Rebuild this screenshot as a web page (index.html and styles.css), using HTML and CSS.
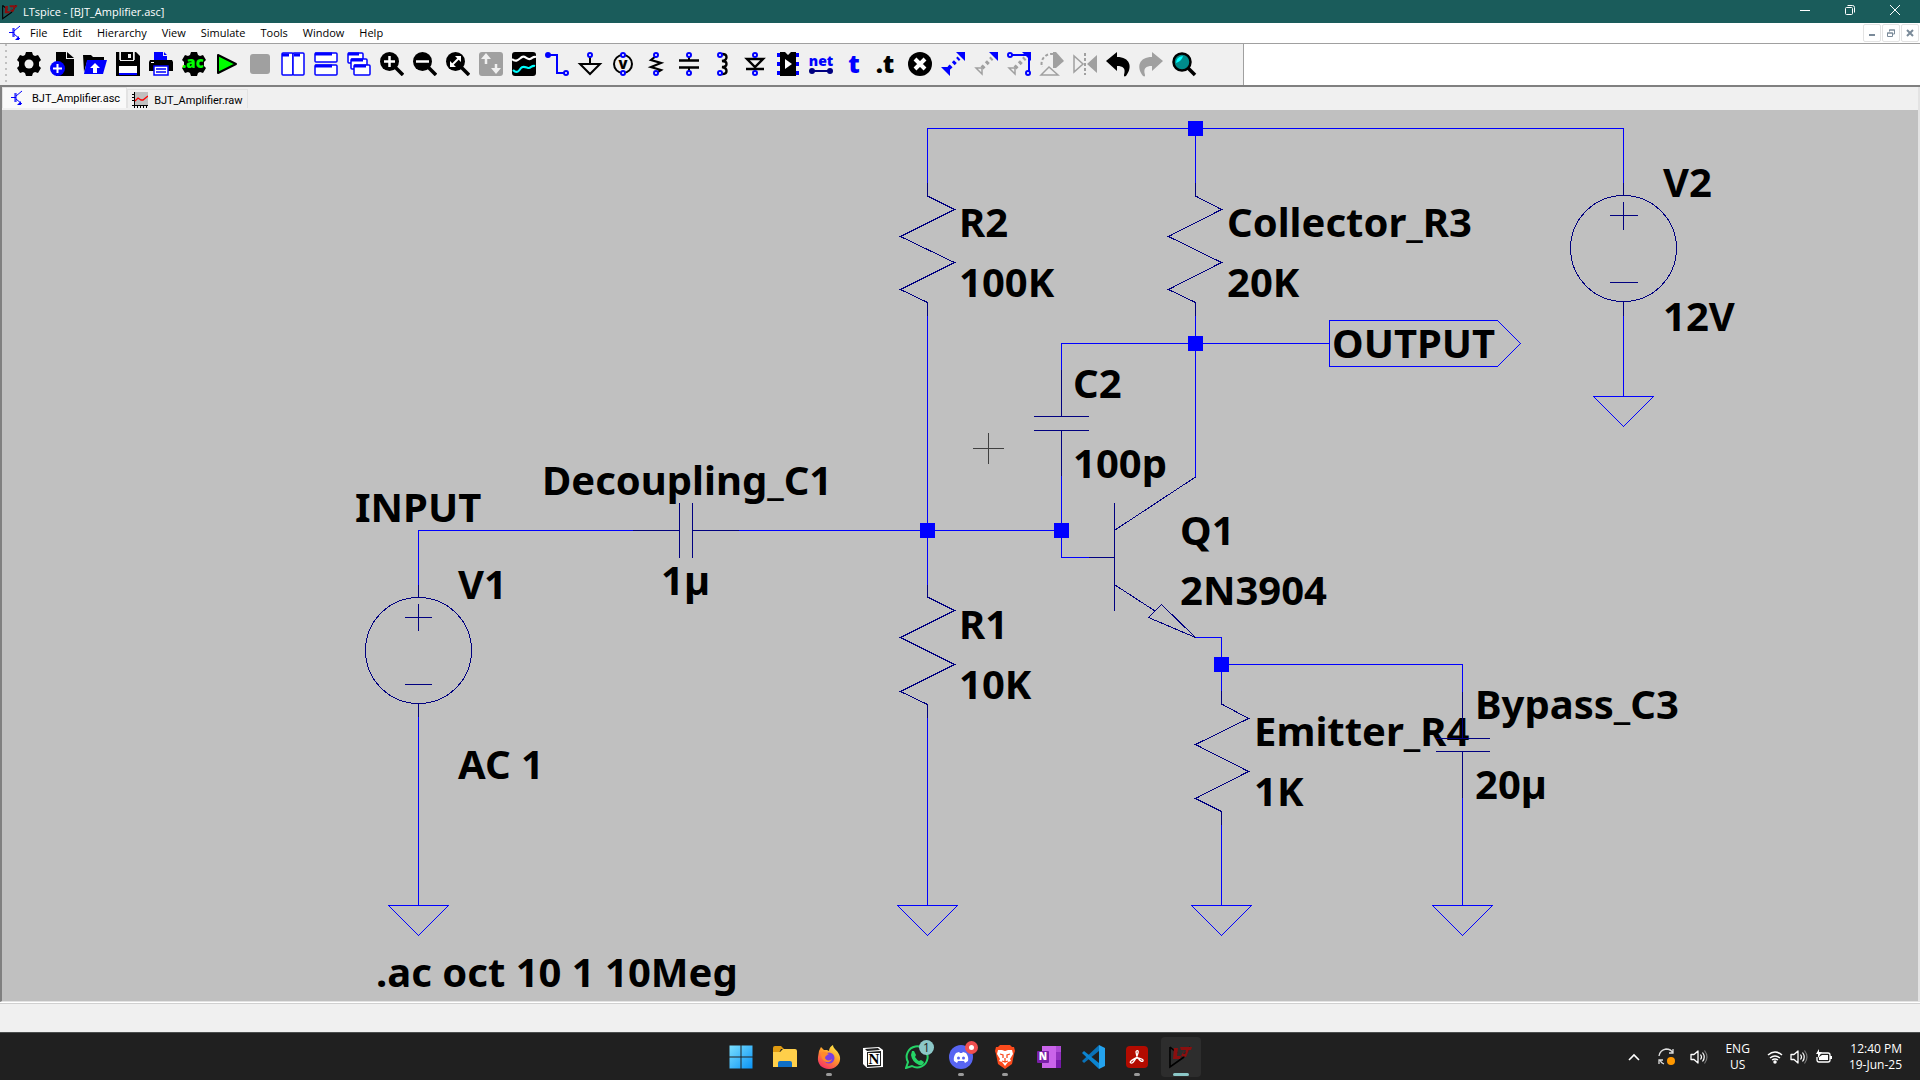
FILE: index.html
```html
<!DOCTYPE html>
<html lang="en">
<head>
<meta charset="utf-8">
<title>LTspice - [BJT_Amplifier.asc]</title>
<link rel="stylesheet" href="styles.css">
</head>
<body>
<svg class="defs" aria-hidden="true">
  <symbol id="lt-logo" viewBox="0 0 24 24"><path d="M1 2v20l14-10M1 2l7 6M21 2l-7 11" fill="none" stroke="#000" stroke-width="1.6"/><path d="M5 3h4l-1 8h4l-1 3H4zM11 2h12l-1 3h-2l-3 7-5-1 3-6h-3zM15 5l-1 4h2l1-4z" fill="#8b0f0f" fill-rule="evenodd"/></symbol>
  <symbol id="npn" viewBox="0 0 12 16"><path d="M4 3v9M5 3v9M0 7.500h5M5 6l6-5M5 9l6 5" fill="none" stroke="#00f"/><path d="M10 11v4H6z" fill="#00f"/></symbol>
  <symbol id="gear" viewBox="0 0 24 24"><path d="M8 3l1-3h6l1 3 2 1 3-1 3 5-2 2v4l2 2-3 5-3-1-2 1-1 3H9l-1-3-2-1-3 1-3-5 2-2v-4L0 8l3-5 3 1z"/></symbol>
  <symbol id="lens" viewBox="0 0 24 24"><circle cx="9.500" cy="9.500" r="9.500"/><path d="M15 15l8 8" stroke="#000" stroke-width="3.500"/></symbol>
  <symbol id="speaker" viewBox="0 0 18 16"><path d="M1 5.500h3L8 2v12l-4-3.500H1z" fill="none" stroke="#fff" stroke-width="1.300" stroke-linejoin="round"/><path d="M10.500 5.500q2 2.500 0 5M12.500 3.500q3.500 4.500 0 9" fill="none" stroke="#fff" stroke-width="1.200"/><path d="M14.500 1.500q5 6.500 0 13" fill="none" stroke="#777" stroke-width="1.200"/></symbol>
  <symbol id="ground" viewBox="0 0 62 32" overflow="visible"><path d="M.5 .5h60L30.500 30.500z" fill="none" stroke="#00f"/></symbol>
</svg>

<div class="window">
  <header class="titlebar">
    <svg class="app-icon"><use href="#lt-logo"/></svg>
    <h1 class="title">LTspice - [BJT_Amplifier.asc]</h1>
    <button class="win-btn" aria-label="Minimize"><svg width="10" height="10"><path d="M0 5.500h10" stroke="#fff"/></svg></button>
    <button class="win-btn" aria-label="Restore"><svg width="10" height="10" fill="none" stroke="#fff"><rect x=".5" y="2.500" width="7" height="7" rx="1"/><path d="M2.500 .5h5q2 0 2 2v5"/></svg></button>
    <button class="win-btn" aria-label="Close"><svg width="10" height="10"><path d="M0 0l10 10M10 0L0 10" stroke="#fff"/></svg></button>
  </header>

  <nav class="menubar">
    <svg class="doc-icon"><use href="#npn"/></svg>
    <button>File</button><button>Edit</button><button>Hierarchy</button><button>View</button><button>Simulate</button><button>Tools</button><button>Window</button><button>Help</button>
    <div class="mdi">
      <button aria-label="Minimize document"><svg width="8" height="8"><path d="M1 6h6" stroke="#7a8a99" stroke-width="2"/></svg></button>
      <button aria-label="Restore document"><svg width="8" height="8" fill="none" stroke="#7a8a99"><path d="M2.500 2.500V1h5v4H6M.5 4v3.500h5V4zM0 4h6M2 1h6" /></svg></button>
      <button aria-label="Close document"><svg width="8" height="8"><path d="M1 1l6 6M7 1L1 7" stroke="#7a8a99" stroke-width="2"/></svg></button>
    </div>
  </nav>

  <div class="toolbar-row">
    <div class="toolbar" role="toolbar" aria-label="Main">
      <button aria-label="Settings"><svg viewBox="0 0 24 24"><use href="#gear"/><circle cx="12" cy="12" r="4.500" fill="#f0f0f0"/></svg></button>
      <button aria-label="New schematic"><svg viewBox="0 0 24 24"><path d="M6 0h10v7h8v17H6z"/><path d="M17 0l7 6h-7z"/><circle cx="7.500" cy="16.500" r="7.500" fill="#00f"/><path d="M7.500 12v9M3 16.500h9" stroke="#fff" stroke-width="2"/></svg></button>
      <button aria-label="Open"><svg viewBox="0 0 24 24"><path d="M0 3h8l2 2h11v5H4L1 20z"/><path d="M4 8h20l-4 14H1z" fill="#00f"/><path d="M12 11l5 5h-3v5h-4v-5H7z" fill="#fff"/></svg></button>
      <button aria-label="Save"><svg viewBox="0 0 24 24"><path d="M0 0h4v9h14V0h2l4 4v20H0z"/><path d="M5 0h12v8H5z"/><path d="M4 0v8M18 0v8" stroke="#f0f0f0" stroke-width="1.500"/><path d="M12 2h3v4h-3z" fill="#f0f0f0"/><path d="M3 14h18v8H3z" fill="#fff"/><path d="M3 21h18v2H3z" fill="#00f"/></svg></button>
      <button aria-label="Print"><svg viewBox="0 0 24 24"><path d="M5 0h9v4h4v4H5zM15 0l3 3h-3z" fill="#00f"/><path d="M1 8h22l1 2v9H0v-9z"/><path d="M5 14h14v9H5z" fill="#fff" stroke="#00f" stroke-width="1.500"/><path d="M7 17h10M7 20h10" stroke="#00f" stroke-width="1.500"/><path d="M2 10h3v1H2z" fill="#fff"/></svg></button>
      <button aria-label="Configure analysis"><svg viewBox="0 0 24 24"><use href="#gear"/><text class="ico-text" x="0" y="16" font-size="15" fill="#0f0">.ac</text></svg></button>
      <button aria-label="Run"><svg viewBox="0 0 24 24"><path d="M3 3v18l18-9z" fill="#0f0" stroke="#000" stroke-width="2" stroke-linejoin="round"/></svg></button>
      <button aria-label="Stop" disabled><svg viewBox="0 0 24 24"><rect x="2" y="2" width="20" height="20" rx="3" fill="#a0a0a0"/></svg></button>
      <button aria-label="Tile vertically"><svg viewBox="0 0 24 24" fill="#fff" stroke="#00f" stroke-width="1.500"><rect x="1" y="1" width="11" height="22" rx="1"/><rect x="12" y="1" width="11" height="22" rx="1"/><path d="M1 3h7M13 3h6" stroke-width="3"/></svg></button>
      <button aria-label="Tile horizontally"><svg viewBox="0 0 24 24" fill="#fff" stroke="#00f" stroke-width="1.500"><rect x="1" y="1" width="22" height="9" rx="1"/><rect x="1" y="13" width="22" height="10" rx="1"/><path d="M1 2h17M1 14h17" stroke-width="3"/></svg></button>
      <button aria-label="Cascade"><svg viewBox="0 0 24 24" fill="#fff" stroke="#00f" stroke-width="1.500"><rect x="1" y="1" width="15" height="10" rx="1"/><path d="M1 2h11" stroke-width="3"/><rect x="4" y="7" width="16" height="10" rx="1"/><path d="M4 8h12" stroke-width="3"/><rect x="7" y="13" width="16" height="10" rx="1"/><path d="M7 14h12" stroke-width="3"/></svg></button>
      <button aria-label="Zoom in"><svg viewBox="0 0 24 24"><use href="#lens"/><path d="M9.500 4v11M4 9.500h11" stroke="#fff" stroke-width="2.500"/></svg></button>
      <button aria-label="Zoom out"><svg viewBox="0 0 24 24"><use href="#lens"/><path d="M3 9.500h13" stroke="#fff" stroke-width="2.500"/></svg></button>
      <button aria-label="Zoom to fit"><svg viewBox="0 0 24 24"><use href="#lens"/><path d="M6 13l7-7" stroke="#fff" stroke-width="2"/><path d="M9 4h6v6zM4 9v6h6z" fill="#fff"/></svg></button>
      <button aria-label="Autorange" disabled><svg viewBox="0 0 24 24"><rect width="24" height="24" rx="3" fill="#a0a0a0"/><path d="M7 5v7M17 12v7" stroke="#f0f0f0" stroke-width="2.500"/><path d="M7 1l5 6H2zM17 22l-5-6h10z" fill="#f0f0f0"/></svg></button>
      <button aria-label="Waveforms"><svg viewBox="0 0 24 24"><rect width="24" height="24" rx="3"/><path d="M0 7c4 4 7 0 10-2s5 3 8 2 3-3 6-2" fill="none" stroke="#fff" stroke-width="2.200"/><path d="M1 18c4 4 6 1 8-2s6 0 8 0 3-3 6-2" fill="none" stroke="#0ff" stroke-width="2.200"/></svg></button>
      <button aria-label="Wire"><svg viewBox="0 0 24 24" fill="none" stroke="#00f" stroke-width="2"><circle cx="3" cy="3" r="2" fill="#00f"/><path d="M3 3h9v18h7"/><circle cx="21" cy="21" r="2" fill="#fff"/></svg></button>
      <button aria-label="Ground"><svg viewBox="0 0 24 24" fill="none" stroke="#000" stroke-width="2"><path d="M12 5v7M2 12h20L12 22z"/><circle cx="12" cy="3" r="2" stroke="#00f" fill="#fff"/></svg></button>
      <button aria-label="Voltage source"><svg viewBox="0 0 24 24"><circle cx="12" cy="12" r="9" fill="none" stroke="#000" stroke-width="2"/><text class="ico-text" x="12" y="17" text-anchor="middle" font-size="13">V</text><g fill="#fff" stroke="#00f" stroke-width="2"><circle cx="12" cy="3" r="2"/><circle cx="12" cy="21" r="2"/></g></svg></button>
      <button aria-label="Resistor"><svg viewBox="0 0 24 24"><path d="M12 4l-5 4 10 3-10 4 10 3-5 3" fill="none" stroke="#000" stroke-width="2.200"/><g fill="#fff" stroke="#00f" stroke-width="2"><circle cx="12" cy="3" r="2"/><circle cx="12" cy="21" r="2"/></g></svg></button>
      <button aria-label="Capacitor"><svg viewBox="0 0 24 24"><path d="M2 8.500h20M2 15.500h20" stroke="#000" stroke-width="2.600"/><path d="M12 4v4M12 16v4" stroke="#000" stroke-width="2"/><g fill="#fff" stroke="#00f" stroke-width="2"><circle cx="12" cy="3" r="2"/><circle cx="12" cy="21" r="2"/></g></svg></button>
      <button aria-label="Inductor"><svg viewBox="0 0 24 24"><path d="M12 2c6 0 6 6 0 7 6 0 6 6 0 6 6 1 6 7 0 7" fill="none" stroke="#000" stroke-width="2.400"/><g fill="#fff" stroke="#00f" stroke-width="2"><circle cx="10" cy="3" r="2"/><circle cx="10" cy="21" r="2"/></g></svg></button>
      <button aria-label="Diode"><svg viewBox="0 0 24 24"><path d="M4 7h16l-8 8zM3 17h18" fill="none" stroke="#000" stroke-width="2.400"/><g fill="#fff" stroke="#00f" stroke-width="2"><circle cx="12" cy="3" r="2"/><circle cx="12" cy="21" r="2"/></g></svg></button>
      <button aria-label="Component"><svg viewBox="0 0 24 24"><path d="M3 1v23M21 1v23" stroke="#00f" stroke-width="4" stroke-dasharray="4 5"/><path d="M4 0h5l3 3 3-3h5v24H4z"/><path d="M9 7v10l7-5z" fill="#fff"/></svg></button>
      <button aria-label="Label net"><svg viewBox="0 0 24 24"><text class="ico-text" x="12" y="14" text-anchor="middle" font-size="14" fill="#00f">net</text><path d="M3 19h18" stroke="#000080" stroke-width="2"/><circle cx="3" cy="19" r="3" fill="#000080"/><circle cx="21" cy="19" r="3" fill="#000080"/></svg></button>
      <button aria-label="Text"><svg viewBox="0 0 24 24"><text class="ico-text" x="12" y="21" text-anchor="middle" font-size="25" fill="#00f">t</text></svg></button>
      <button aria-label="SPICE directive"><svg viewBox="0 0 24 24"><text class="ico-text" x="10" y="21" text-anchor="middle" font-size="25">.t</text></svg></button>
      <button aria-label="Delete"><svg viewBox="0 0 24 24"><circle cx="12" cy="12" r="12"/><path d="M7 7l10 10M17 7L7 17" stroke="#fff" stroke-width="4"/></svg></button>
      <button aria-label="Duplicate"><svg viewBox="0 0 24 24" fill="#00f"><path d="M15 0h9v9zM0 15h9v9z"/><path d="M8 16l10-10" stroke="#00f" stroke-width="4" stroke-dasharray="3 3"/></svg></button>
      <button aria-label="Move"><svg viewBox="0 0 24 24" fill="#00f"><path d="M15 0h9v9z"/><path d="M8 16l10-10" stroke="#a0a0a0" stroke-width="4" stroke-dasharray="3 3"/><path d="M2 16h6v6z" fill="none" stroke="#a0a0a0" stroke-width="1.500"/></svg></button>
      <button aria-label="Drag"><svg viewBox="0 0 24 24" fill="#00f"><path d="M15 0h9v9z"/><path d="M8 16l10-10" stroke="#a0a0a0" stroke-width="4" stroke-dasharray="3 3"/><path d="M2 16h6v6z" fill="none" stroke="#a0a0a0" stroke-width="1.500"/><path d="M5 3h17v16" fill="none" stroke="#00f" stroke-width="2"/><g fill="#fff" stroke="#00f" stroke-width="2"><circle cx="3" cy="3" r="2"/><circle cx="21" cy="21" r="2"/></g></svg></button>
      <button aria-label="Rotate" disabled><svg viewBox="0 0 24 24" fill="#a0a0a0"><path d="M13 0h3l8 9-8 7h-3z"/><path d="M13 2A10 10 0 0 0 2 15" fill="none" stroke="#a0a0a0" stroke-width="2" stroke-dasharray="3 2"/><path d="M1 23l8-8 9 8z" fill="none" stroke="#a0a0a0" stroke-width="1.500"/></svg></button>
      <button aria-label="Mirror" disabled><svg viewBox="0 0 24 24" fill="#a0a0a0"><path d="M24 3v18L14 12z"/><path d="M1 4v16l9-8z" fill="none" stroke="#a0a0a0" stroke-width="1.500"/><path d="M12 1v22" stroke="#a0a0a0" stroke-width="2" stroke-dasharray="3 2"/></svg></button>
      <button aria-label="Undo"><svg viewBox="0 0 24 24"><path d="M0 9l11-9v5c13 0 16 10 9 19-2 1-2 0-2-1 2-7-1-9-7-9v5z"/></svg></button>
      <button aria-label="Redo" disabled><svg viewBox="0 0 24 24"><path d="M24 9L13 0v5C0 5-3 15 4 24c2 1 2 0 2-1-2-7 1-9 7-9v5z" fill="#a0a0a0"/></svg></button>
      <button aria-label="Find"><svg viewBox="0 0 24 24"><path d="M15 15l8 8" stroke="#000" stroke-width="3.500"/><circle cx="10" cy="10" r="8.500" fill="#008b8b" stroke="#000" stroke-width="2.500"/><path d="M4 11q0-6 7-7-1 5-7 7z" fill="#0ff"/></svg></button>
    </div>
  </div>

  <main class="client">
    <div class="tabs" role="tablist">
      <button class="tab active" role="tab" aria-selected="true"><svg class="doc-icon"><use href="#npn"/></svg>BJT_Amplifier.asc</button>
      <button class="tab" role="tab" aria-selected="false"><svg class="plot-icon" viewBox="0 0 16 16"><path fill="#c0c0c0" d="M2 0h14v14H2z"/><path d="M2.500 0v16M0 13.500h16M0 2.500h2M0 5.500h2M0 8.500h2M5.500 14v2M8.500 14v2M11.500 14v2M14.500 14v2" stroke="#000"/><path d="M3 9l3-3 3 2h2l5-4" fill="none" stroke="#f00" stroke-width="1.300"/></svg>BJT_Amplifier.raw</button>
    </div>
    <svg class="schematic" viewBox="2 110 1916 891" preserveAspectRatio="xMidYMid meet" role="img" aria-label="BJT amplifier schematic">
      <g class="labels">
        <text x="355" y="522">INPUT</text>
        <text x="542" y="495">Decoupling_C1</text>
        <text x="458" y="599">V1</text>
        <text x="661" y="595">1µ</text>
        <text x="458" y="779">AC 1</text>
        <text x="959" y="237">R2</text>
        <text x="959" y="297">100K</text>
        <text x="959" y="639">R1</text>
        <text x="959" y="699">10K</text>
        <text x="1227" y="237">Collector_R3</text>
        <text x="1227" y="297">20K</text>
        <text x="1073" y="398">C2</text>
        <text x="1073" y="478">100p</text>
        <text x="1332" y="358">OUTPUT</text>
        <text x="1180" y="545">Q1</text>
        <text x="1180" y="605">2N3904</text>
        <text x="1254" y="746">Emitter_R4</text>
        <text x="1254" y="806">1K</text>
        <text x="1475" y="719">Bypass_C3</text>
        <text x="1475" y="799">20µ</text>
        <text x="1663" y="197">V2</text>
        <text x="1663" y="331">12V</text>
        <text x="376" y="987">.ac oct 10 1 10Meg</text>
      </g>
      <g class="wires">
        <path d="M418.500 585V530.500H633M739 530.500H1061.500M418.500 717V905"/>
        <path d="M927.500 183V128.500H1623.500V183M927.500 316V585M927.500 718V905"/>
        <path d="M1195.500 128V183M1195.500 316V477M1061.500 370V343.500H1329"/>
        <path d="M1061.500 476V557.500H1089M1195 637.500H1221.500V691M1221 664.500H1462.500V692M1221.500 825V905M1462.500 798V905M1623.500 316V396"/>
        <path d="M1329.500 320.500H1497.500L1520.500 343.500L1497.500 366.500H1329.500z"/>
        <use href="#ground" x="388" y="905" width="62" height="32"/>
        <use href="#ground" x="897" y="905" width="62" height="32"/>
        <use href="#ground" x="1191" y="905" width="62" height="32"/>
        <use href="#ground" x="1432" y="905" width="62" height="32"/>
        <use href="#ground" x="1593" y="396" width="62" height="32"/>
      </g>
      <g class="parts">
        <path d="M633 530.500H679.500M679.500 503V558M692.500 503V558M692.500 530.500H739"/>
        <path d="M418.500 585V597M418.500 703V717M405 617.500H432M418.500 604V631M405 684.500H432"/>
        <circle cx="418.500" cy="650.500" r="53"/>
        <path d="M1623.500 183V195M1623.500 301V316M1610 215.500H1638M1623.500 202V230M1610 282.500H1638"/>
        <circle cx="1623.500" cy="248.500" r="53"/>
        <path d="M927.500 183V196L954.500 209.500L900.500 236.500L954.500 262.500L900.500 289.500L927.500 302.500V316"/>
        <path d="M1195.500 183V196L1221.500 209.500L1168.500 236.500L1221.500 262.500L1168.500 289.500L1195.500 302.500V316"/>
        <path d="M927.500 585V597L954.500 610.500L900.500 637.500L954.500 664.500L900.500 691.500L927.500 704.500V718"/>
        <path d="M1221.500 691V704L1248.500 718.500L1195.500 744.500L1248.500 771.500L1195.500 798.500L1221.500 811.500V825"/>
        <path d="M1061.500 370V416.500M1034 416.500H1089M1034 430.500H1089M1061.500 430V476"/>
        <path d="M1462.500 692V738.500M1436 738.500H1490M1436 751.500H1490M1462.500 751V798"/>
        <path d="M1089 557.500H1114M1114.500 503V611M1115 530L1195.500 477M1115 585L1155 611M1161.500 604.500L1148.500 617.500L1195.500 637.500z"/>
      </g>
      <g class="nodes">
        <rect x="1188" y="121" width="15" height="15"/><rect x="1188" y="336" width="15" height="15"/><rect x="920" y="523" width="15" height="15"/><rect x="1054" y="523" width="15" height="15"/><rect x="1214" y="657" width="15" height="15"/>
      </g>
      <path class="cursor" d="M973 448.500H1004M988.500 433V464"/>
    </svg>
  </main>
  <footer class="statusbar"></footer>
</div>

<footer class="taskbar">
  <nav class="apps">
    <button class="app" aria-label="Start"><svg viewBox="0 0 24 24"><defs><linearGradient id="win" x2="1" y2="1"><stop stop-color="#7be0ff"/><stop offset="1" stop-color="#0a93f5"/></linearGradient></defs><path d="M.5 .5h11v11H.5zM12.500 .5h11v11h-11zM.5 12.500h11v11H.5zM12.500 12.500h11v11h-11z" fill="url(#win)"/></svg></button>
    <button class="app" aria-label="File Explorer"><svg viewBox="0 0 24 24"><path d="M0 3q0-2 2-2h6l3 3h-3l-2 4H0z" fill="#e09b10"/><path d="M0 7h7l3-3h12q2 0 2 2v16H0z" fill="#ffcf4a"/><path d="M5 22v-4q0-2 2-2h10q2 0 2 2v4z" fill="#0f6fc6"/></svg></button>
    <button class="app running" aria-label="Firefox"><svg viewBox="0 0 24 24"><defs><linearGradient id="fox" x1=".8" x2=".2" y2="1"><stop stop-color="#fff04a"/><stop offset=".45" stop-color="#ff9a2a"/><stop offset="1" stop-color="#f5276a"/></linearGradient></defs><path d="M2 6l2-4 3 3 3 0 2 1c0-3 2-5 4-6 0 4 6 6 7 12 1 6-4 12-11 12S0 19 1 12z" fill="url(#fox)"/><circle cx="12" cy="13" r="5.500" fill="#7a3fe0"/><path d="M4 8c3-3 6 0 8 1-2 1-4 2-4 4 1 3 5 3 7 1-1 5-11 5-11-6z" fill="#ff8a2a"/></svg></button>
    <button class="app" aria-label="Notion"><svg viewBox="0 0 24 24"><path d="M2 3l16-1 4 3v17L6 23l-4-4z" fill="#fff"/><path d="M4 4l13-1 2 2L6 6zM6 7l14-1v15L6 22z" fill="#202020"/><path d="M7 8h12v12H7z" fill="#fff"/><text class="ico-text ico-serif" x="13" y="19" text-anchor="middle" font-size="15">N</text></svg></button>
    <button class="app" aria-label="WhatsApp, 1 new"><svg viewBox="0 0 24 24"><path d="M1 23l2-6A10.500 10.500 0 1 1 7 21z" fill="none" stroke="#25d366" stroke-width="2"/><path d="M7 6l2 0 2 4-1 2q2 3 4 4l2-1 3 2q-1 4-5 3Q7 17 6 10z" fill="#25d366"/></svg><span class="badge">1</span></button>
    <button class="app running" aria-label="Discord"><svg viewBox="0 0 24 24"><circle cx="12" cy="12" r="12" fill="#5865f2"/><path d="M7 8l3-1 1 1h2l1-1 3 1q3 4 2 8l-3 2-1-2H9l-1 2-3-2q-1-4 2-8z" fill="#fff"/><circle cx="9.500" cy="13" r="1.500" fill="#5865f2"/><circle cx="14.500" cy="13" r="1.500" fill="#5865f2"/></svg><span class="badge live"></span></button>
    <button class="app running" aria-label="Brave"><svg viewBox="0 0 24 24"><path d="M7 0h10l2 2h2l1 4-1 3-2 10-7 5-7-5L3 9 2 6l1-4h2z" fill="#fb4a1c"/><path d="M5 5l4 0 3 1 3-1h4l1 4-3 5 1 2-3 1-3 4-3-4-3-1 1-2-3-5z" fill="#fff"/><path d="M7 9l3 1 0 3M17 9l-3 1 0 3M9 16l3 1 3-1M12 13v4" fill="none" stroke="#fb4a1c" stroke-width="1.300"/></svg></button>
    <button class="app" aria-label="OneNote"><svg viewBox="0 0 24 24"><path d="M5 1h19v22H5z" fill="#ca64ea"/><path d="M19 1h5v6h-5z" fill="#ae4bd5"/><path d="M19 7h5v8h-5z" fill="#9332bf"/><path d="M19 15h5v8h-5z" fill="#7719aa"/><rect y="6" width="12" height="12" rx="1" fill="#7a1fa8"/><text class="ico-text" x="6" y="15" text-anchor="middle" font-size="10" fill="#fff">N</text></svg></button>
    <button class="app" aria-label="Visual Studio Code"><svg viewBox="0 0 24 24"><path d="M1 16l2 2L18 6V0z" fill="#0a72b8"/><path d="M1 8l2-2 15 12v6z" fill="#0b84d0"/><path d="M18 0l6 3v18l-6 3z" fill="#24a3ee"/></svg></button>
    <button class="app running" aria-label="Acrobat"><svg viewBox="0 0 24 24"><rect x="1" y="1" width="22" height="22" rx="4" fill="#b30b00"/><path d="M6 18c-3-1 4-5 6-5s7 1 6 3-7-3-7-9c0-2 3-2 2 1-1 4-5 11-7 10z" fill="none" stroke="#fff" stroke-width="1.300"/></svg></button>
    <button class="app current" aria-label="LTspice"><svg viewBox="0 0 24 24"><use href="#lt-logo"/></svg></button>
  </nav>
  <div class="tray">
    <button aria-label="Show hidden icons"><svg width="12" height="16"><path d="M1 11l5-5 5 5" fill="none" stroke="#fff" stroke-width="1.600"/></svg></button>
    <button class="sync" aria-label="Updates"><svg width="18" height="18" viewBox="0 0 18 18"><path d="M1 8q1-6 7-7 5 0 7 4M15 1v4h-4M6 16q-3-1-4-4M1 16v-4h4" fill="none" stroke="#ddd" stroke-width="1.300"/><circle cx="13" cy="13" r="4" fill="#ff9800"/></svg></button>
    <button aria-label="Audio device"><svg width="18" height="16"><use href="#speaker"/></svg></button>
    <button class="lang">ENG<br>US</button>
    <button class="quick" aria-label="Network, volume, battery">
      <svg width="16" height="16" fill="none" stroke="#fff" stroke-width="1.500"><path d="M1 6q7-6 14 0M3 9q5-4 10 0M5 11q3-2 6 0"/><circle cx="8" cy="13" r="1" fill="#fff"/></svg>
      <svg width="18" height="16"><use href="#speaker"/></svg>
      <svg width="18" height="16"><path d="M5 4h8q2 0 2 2v5q0 2-2 2H4q-2 0-2-2V8" fill="none" stroke="#fff" stroke-width="1.300"/><path d="M4 8l3-2h6v5H4z" fill="#fff"/><path d="M15 7h2v3h-2zM4 0L1 5h2v4l4-6H4z" fill="#fff"/></svg>
    </button>
    <button class="clock"><time>12:40 PM<br>19-Jun-25</time></button>
  </div>
</footer>
</body>
</html>
```
FILE: styles.css
```css
* { box-sizing: border-box; }

body {
  margin: 0;
  height: 100vh;
  display: flex;
  flex-direction: column;
  overflow: hidden;
  background: #f0f0f0;
  color: #000;
  font: 11px/16px "Open Sans", sans-serif;
}

button {
  margin: 0;
  padding: 0;
  border: 0;
  background: none;
  color: inherit;
  font: inherit;
  display: flex;
  align-items: center;
  justify-content: center;
}

svg { display: block; flex: none; }
.defs { position: absolute; width: 0; height: 0; }

.window { flex: 1; min-height: 0; display: flex; flex-direction: column; }

/* Title bar */
.titlebar {
  height: 23px;
  flex: none;
  display: flex;
  align-items: center;
  background: #1a5c5b;
  color: #fff;
}
.app-icon { width: 16px; height: 18px; margin: 0 5px 0 2px; }
.title { margin: 0; flex: 1; font-size: 11px; font-weight: 400; }
.win-btn { width: 45px; height: 20px; align-self: flex-start; }
.win-btn:last-child { margin-right: 3px; }

/* Menu */
.menubar {
  height: 21px;
  flex: none;
  display: flex;
  align-items: center;
  gap: 15px;
  padding-left: 9px;
  background: #fff;
  border-bottom: 1px solid #a0a0a0;
}
.doc-icon { width: 12px; height: 16px; }
.menubar > .doc-icon { margin-right: -6px; }
.mdi { margin-left: auto; display: flex; gap: 1px; padding-right: 1px; }
.mdi button { width: 18px; height: 18px; border: 1px solid #e3e3e3; border-radius: 2px; }

/* Toolbar */
.toolbar-row {
  height: 43px;
  flex: none;
  display: flex;
  background: #fff;
  border-bottom: 2px solid #808080;
}
.toolbar {
  width: 1244px;
  display: flex;
  align-items: center;
  gap: 9px;
  padding: 0 0 1px 17px;
  background: radial-gradient(circle, #c0c0c0 1px, transparent 1px) 4px 4px / 4px 6px repeat-y, #f0f0f0;
  border-right: 1px solid #a0a0a0;
}
.toolbar svg { width: 24px; height: 24px; overflow: visible; }
.ico-text { font-family: "Noto Sans", sans-serif; font-weight: 900; }
.ico-serif { font-family: "Liberation Serif", serif; }

/* Document area */
.client {
  flex: 1;
  min-height: 0;
  display: flex;
  flex-direction: column;
  border: solid #e3e3e3;
  border-width: 0 2px 1px;
  border-left-color: #808080;
}
.tabs { height: 23px; flex: none; display: flex; }
.tab {
  height: 19px;
  margin-top: 2px;
  padding: 2px 4px 0;
  gap: 6px;
  border: 1px solid #e3e3e3;
  border-bottom: 0;
  font: 11px/13px Roboto, sans-serif;
}
.tab.active { height: 21px; margin-top: 0; padding: 0 6px 0 8px; gap: 9px; background: #f9f9f9; }
.plot-icon { width: 16px; height: 16px; }

.schematic { width: 100%; flex: 1 1 0; min-height: 0; background: #c0c0c0; }
.labels { font: 700 40px "Noto Sans", sans-serif; }
.wires, .parts, .cursor { fill: none; shape-rendering: crispEdges; }
.wires { stroke: #00f; }
.parts { stroke: #000080; }
.nodes { fill: #00f; shape-rendering: crispEdges; }
.cursor { stroke: #404040; }

.statusbar {
  height: 30px;
  flex: none;
  background: #f0f0f0;
  border-top: 1px solid #fff;
  box-shadow: inset 0 1px #d0d0d0;
}

/* Taskbar */
.taskbar {
  height: 48px;
  flex: none;
  display: grid;
  grid-template-columns: 1fr auto 1fr;
  background: #202020;
  border-top: 1px solid #4a4d4d;
  color: #fff;
  font-size: 12px;
}
.apps { grid-column: 2; display: flex; align-items: center; padding-left: 2px; }
.app { position: relative; width: 44px; height: 47px; }
.app svg { width: 24px; height: 24px; }
.app.current { background: #2d2d2d; border-radius: 4px; width: 40px; height: 40px; margin: 0 2px; }
.running::after, .current::after {
  content: "";
  position: absolute;
  left: 50%;
  bottom: 4px;
  width: 6px;
  height: 3px;
  margin-left: -3px;
  border-radius: 2px;
  background: #9a9a9a;
}
.current::after { width: 16px; margin-left: -8px; bottom: 1px; background: #8cc8c8; }
.badge {
  position: absolute;
  top: 7px;
  right: 5px;
  width: 15px;
  height: 15px;
  border-radius: 50%;
  background: #8cc8c8;
  color: #202020;
  line-height: 15px;
}
.badge.live { top: 8px; width: 13px; height: 13px; border: 4px solid #f04f4f; background: #fff; }

.tray { justify-self: end; display: flex; align-items: center; padding-right: 18px; line-height: 16px; }
.sync { margin: 0 14px 0 18px; }
.lang { margin: 0 17px; }
.quick { gap: 7px; margin-right: 16px; }
.clock { text-align: right; }
```
